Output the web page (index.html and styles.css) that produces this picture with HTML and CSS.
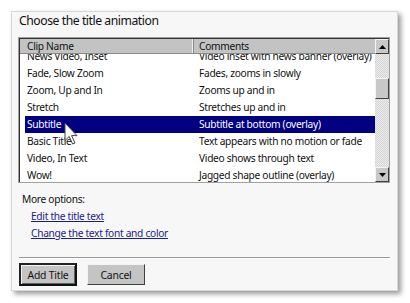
FILE: index.html
```html
<!DOCTYPE html>
<html lang="en">
<head>
  <meta charset="UTF-8">
  <title>Choose the title animation</title>
  <link rel="stylesheet" href="styles.css">
</head>
<body>
  <div class="dialog">
    <h1 class="dialog-title">Choose the title animation</h1>

    <div class="clip-list">
      <div class="list-main">
        <div class="list-header">
          <span class="col-name">Clip Name</span>
          <span class="col-comment">Comments</span>
        </div>
        <div class="list-rows">
          <div class="row first"><span class="col-name">News Video, Inset</span><span class="col-comment">Video inset with news banner (overlay)</span></div>
          <div class="row"><span class="col-name">Fade, Slow Zoom</span><span class="col-comment">Fades, zooms in slowly</span></div>
          <div class="row"><span class="col-name">Zoom, Up and In</span><span class="col-comment">Zooms up and in</span></div>
          <div class="row"><span class="col-name">Stretch</span><span class="col-comment">Stretches up and in</span></div>
          <div class="row selected"><span class="col-name">Subtitle</span><span class="col-comment">Subtitle at bottom (overlay)</span></div>
          <div class="row"><span class="col-name">Basic Title</span><span class="col-comment">Text appears with no motion or fade</span></div>
          <div class="row"><span class="col-name">Video, In Text</span><span class="col-comment">Video shows through text</span></div>
          <div class="row"><span class="col-name">Wow!</span><span class="col-comment">Jagged shape outline (overlay)</span></div>
        </div>
      </div>
      <div class="scrollbar">
        <div class="sb-button"><svg width="7" height="4" viewBox="0 0 7 4"><path d="M0 4 L3.5 0 L7 4 Z" fill="#000"/></svg></div>
        <div class="sb-track">
          <div class="sb-thumb"></div>
        </div>
        <div class="sb-button"><svg width="7" height="4" viewBox="0 0 7 4"><path d="M0 0 L7 0 L3.5 4 Z" fill="#000"/></svg></div>
      </div>
    </div>

    <div class="options">
      <div class="options-label">More options:</div>
      <a href="#" class="option-link">Edit the title text</a>
      <a href="#" class="option-link">Change the text font and color</a>
    </div>

    <div class="separator"></div>

    <div class="buttons">
      <button class="btn default">Add Title</button>
      <button class="btn">Cancel</button>
    </div>
  </div>

  <!-- mouse pointer over the list -->
  <svg class="pointer" width="14" height="23" viewBox="0 0 14 23">
    <path d="M1 1 L1 18.5 L5.2 14.5 L8.6 22 L11 21 L7.6 13.6 L13 13.6 Z" fill="#fafafa" stroke="#444" stroke-width="1" stroke-linejoin="round"/>
  </svg>
</body>
</html>
```

FILE: styles.css
```css
body {
  margin: 0;
  background-color: #fff;
  font-family: 'Noto Sans', 'DejaVu Sans', sans-serif;
  color: #000;
  position: relative;
  height: 303px;
  overflow: hidden;
}

.dialog {
  box-sizing: border-box;
  margin: 11px 0 0 11px;
  width: 387px;
  height: 280px;
  background-color: #f7f7f7;
  border: 1px solid #d8d8d8;
  box-shadow: 3px 3px 5px rgba(0, 0, 0, 0.4);
  padding: 0 7px 0 6px;
  display: flex;
  flex-direction: column;
}

.dialog-title {
  margin: 0;
  padding-left: 1px;
  font-size: 12.2px;
  letter-spacing: -0.45px;
  font-weight: normal;
  line-height: 17px;
  color: #111;
}

/* list box */
.clip-list {
  box-sizing: border-box;
  margin-top: 8px;
  width: 372px;
  height: 146px;
  border: 1px solid #a0a0a0;
  box-shadow: inset 1px 1px 0 #333;
  background-color: #fff;
  display: flex;
  padding: 1px 0 0 1px;
}

.list-main {
  flex: 1;
  display: flex;
  flex-direction: column;
  min-width: 0;
}

.list-header {
  display: flex;
  height: 14px;
  background-color: #c3c3c3;
  border-bottom: 1px solid #8a8a8a;
  font-size: 10.2px;
  letter-spacing: -0.3px;
  line-height: 14px;
  color: #111;
}

.list-header .col-name {
  box-sizing: border-box;
  width: 174px;
  padding-left: 7px;
  border-right: 1px solid #8a8a8a;
  box-shadow: inset -1px 0 0 #eee;
}

.list-header .col-comment {
  padding-left: 5px;
}

.list-rows {
  flex: 1;
  overflow: hidden;
  padding-left: 5px;
}

.row {
  display: flex;
  height: 17px;
  font-size: 10.2px;
  letter-spacing: -0.3px;
  line-height: 17px;
  color: #111;
  white-space: nowrap;
}

.row.first {
  margin-top: -6px;
}

.row .col-name {
  box-sizing: border-box;
  width: 169px;
  padding-left: 2px;
  flex: 0 0 169px;
}

.row .col-comment {
  padding-left: 5px;
}

.row.selected {
  background-color: #000080;
  color: #fff;
}

/* scrollbar */
.scrollbar {
  width: 14px;
  display: flex;
  flex-direction: column;
}

.sb-button {
  box-sizing: border-box;
  height: 15px;
  background-color: #c8c8c8;
  border: 1px solid;
  border-color: #f4f4f4 #404040 #404040 #f4f4f4;
  display: flex;
  align-items: center;
  justify-content: center;
}

.sb-track {
  flex: 1;
  background-color: #e4e4e4;
  background-image: repeating-conic-gradient(#d4d4d4 0 25%, #ececec 0 50%);
  background-size: 2px 2px;
  padding-top: 24px;
}

.sb-thumb {
  box-sizing: border-box;
  height: 21px;
  background-color: #c8c8c8;
  border: 1px solid;
  border-color: #f4f4f4 #404040 #404040 #f4f4f4;
}

/* links */
.options {
  margin-top: 8px;
  display: flex;
  flex-direction: column;
  font-size: 10.2px;
  letter-spacing: -0.3px;
  line-height: 17px;
}

.options-label {
  padding-left: 4px;
  color: #111;
}

.option-link {
  align-self: flex-start;
  margin-left: 13px;
  color: #1c1c8a;
  text-decoration: underline;
}

.separator {
  margin: 15px 0 0 1px;
  width: 371px;
  height: 1px;
  background-color: #9a9a9a;
  box-shadow: 0 1px 0 #fff;
}

.buttons {
  margin-top: 5px;
  display: flex;
  align-items: flex-start;
  gap: 10px;
  padding-left: 1px;
}

.btn {
  box-sizing: border-box;
  width: 58px;
  height: 21px;
  margin: 1px 0 0;
  padding: 0;
  font-family: 'Noto Sans', 'DejaVu Sans', sans-serif;
  font-size: 10.4px;
  letter-spacing: -0.2px;
  color: #111;
  background-color: #c4c4c4;
  border: 1px solid;
  border-color: #f4f4f4 #404040 #404040 #f4f4f4;
}

.btn.default {
  height: 23px;
  margin-top: 0;
  border: 2px solid;
  border-color: #222 #111 #111 #222;
  box-shadow: inset 1px 1px 0 #f4f4f4, inset -1px -1px 0 #606060;
}

.pointer {
  position: absolute;
  left: 64px;
  top: 122px;
}
```
